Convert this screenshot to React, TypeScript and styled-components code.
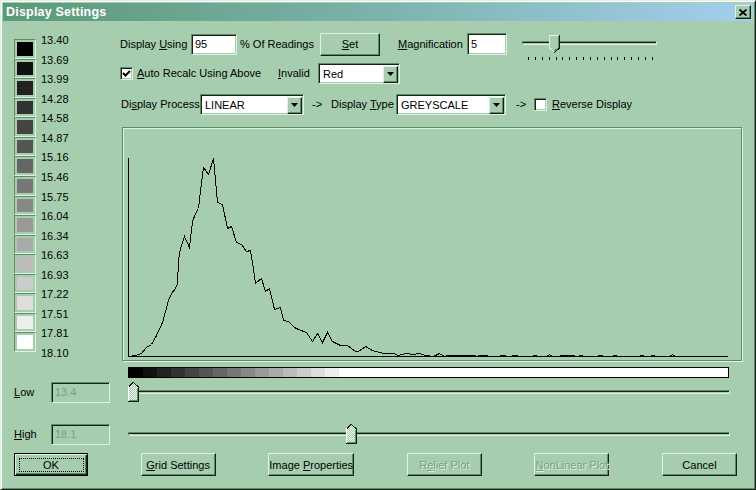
import React from "react";
import styled, { createGlobalStyle, css } from "styled-components";

const FACE = "#a6ceae";
const LIGHT = "#e0f0e3";
const SHADOW = "#5e8c66";
const DARK = "#17211a";
const DIS = "#7a9f83";

const Global = createGlobalStyle`
  html, body { margin: 0; padding: 0; background: ${FACE}; }
  body { font-family: "Liberation Sans", Arial, sans-serif; font-size: 11px; color: #000; }
  * { box-sizing: border-box; }
`;

const Window = styled.div`
  width: 756px;
  height: 490px;
  background: ${FACE};
  border: 1px solid;
  border-color: ${LIGHT} ${DARK} ${DARK} ${LIGHT};
  box-shadow: inset 1px 1px #ffffff, inset -1px -1px ${SHADOW};
  padding: 2px;
  display: flex;
  flex-direction: column;
`;

const TitleBar = styled.div`
  height: 18px;
  flex: none;
  display: flex;
  align-items: center;
  justify-content: space-between;
  padding: 0 2px 0 3px;
  background: linear-gradient(to right, #5b9a78 0%, #78b0a6 45%, #a3cfee 100%);
`;

const TitleText = styled.span`
  color: #fff;
  font-weight: bold;
  font-size: 12.5px;
  letter-spacing: 0.2px;
`;

const CloseBtn = styled.div`
  width: 16px;
  height: 14px;
  background: ${FACE};
  border: 1px solid;
  border-color: ${LIGHT} ${DARK} ${DARK} ${LIGHT};
  box-shadow: inset -1px -1px ${SHADOW};
  display: flex;
  align-items: center;
  justify-content: center;
`;

const Body = styled.div`
  display: flex;
  flex-direction: column;
  padding-left: 11px;
`;

const TopArea = styled.div`
  display: flex;
  margin-top: 12px;
`;

const SwatchArea = styled.div`
  width: 106px;
  display: flex;
  flex: none;
`;

const SwatchCol = styled.div`
  margin-top: 6px;
  width: 22px;
  height: 313px;
  display: flex;
  flex-direction: column;
`;

const Swatch = styled.div<{ $c: string }>`
  flex: 1;
  border: 1px solid;
  border-color: ${SHADOW} ${LIGHT} ${LIGHT} ${SHADOW};
  box-shadow: inset 0 0 0 2px ${FACE};
  background: ${(p) => p.$c};
`;

const ValueCol = styled.div`
  margin-left: 5px;
  height: 327px;
  display: flex;
  flex-direction: column;
  justify-content: space-between;
`;

const Value = styled.span`
  line-height: 14px;
`;

const MainArea = styled.div`
  width: 623px;
  display: flex;
  flex-direction: column;
`;

const Row = styled.div<{ $h: number; $mt?: number }>`
  display: flex;
  align-items: center;
  height: ${(p) => p.$h}px;
  margin-top: ${(p) => p.$mt ?? 0}px;
`;

const Label = styled.span<{ $w?: number; $ml?: number }>`
  display: inline-block;
  flex: none;
  white-space: nowrap;
  line-height: 13px;
  width: ${(p) => (p.$w ? `${p.$w}px` : "auto")};
  margin-left: ${(p) => p.$ml ?? 0}px;
`;

const Field = styled.div<{ $w: number; $h?: number; $disabled?: boolean }>`
  width: ${(p) => p.$w}px;
  height: ${(p) => p.$h ?? 21}px;
  flex: none;
  display: flex;
  align-items: center;
  padding-left: 3px;
  background: ${(p) => (p.$disabled ? FACE : "#fff")};
  color: ${(p) => (p.$disabled ? DIS : "#000")};
  border: 1px solid;
  border-color: ${SHADOW} ${LIGHT} ${LIGHT} ${SHADOW};
  box-shadow: inset 1px 1px ${DARK}, inset -1px -1px ${FACE};
`;

const SelectBox = styled.div<{ $w: number }>`
  width: ${(p) => p.$w}px;
  height: 21px;
  flex: none;
  display: flex;
  align-items: center;
  background: #fff;
  border: 1px solid;
  border-color: ${SHADOW} ${LIGHT} ${LIGHT} ${SHADOW};
  box-shadow: inset 1px 1px ${DARK}, inset -1px -1px ${FACE};
  padding: 2px 1px 1px 2px;
`;

const SelectValue = styled.span`
  flex: 1;
  padding-left: 2px;
  white-space: nowrap;
`;

const DropBtn = styled.div`
  width: 15px;
  height: 17px;
  flex: none;
  background: ${FACE};
  border: 1px solid;
  border-color: ${LIGHT} ${DARK} ${DARK} ${LIGHT};
  box-shadow: inset -1px -1px ${SHADOW};
  display: flex;
  align-items: center;
  justify-content: center;
`;

const CheckBox = styled.div<{ $ml?: number }>`
  width: 13px;
  height: 13px;
  flex: none;
  margin-left: ${(p) => p.$ml ?? 0}px;
  background: #fff;
  border: 1px solid;
  border-color: ${SHADOW} ${LIGHT} ${LIGHT} ${SHADOW};
  box-shadow: inset 1px 1px ${DARK}, inset -1px -1px ${FACE};
  display: flex;
  align-items: center;
  justify-content: center;
`;

const Button = styled.button<{ $w: number; $default?: boolean; $ml?: number }>`
  width: ${(p) => p.$w}px;
  height: 23px;
  flex: none;
  margin: 0;
  margin-left: ${(p) => p.$ml ?? 0}px;
  padding: 0;
  position: relative;
  font: 11px "Liberation Sans", Arial, sans-serif;
  color: #000;
  background: ${FACE};
  border: 1px solid;
  border-color: ${LIGHT} ${DARK} ${DARK} ${LIGHT};
  box-shadow: inset -1px -1px ${SHADOW};
  &:disabled {
    color: ${DIS};
    text-shadow: 1px 1px ${LIGHT};
  }
  ${(p) =>
    p.$default &&
    css`
      border: 1px solid #000;
      box-shadow: inset 1px 1px ${LIGHT}, inset -1px -1px ${DARK}, inset -2px -2px ${SHADOW};
      &::after {
        content: "";
        position: absolute;
        inset: 4px 3px 3px 4px;
        border: 1px dotted #000;
      }
    `}
`;

const MagSlider = styled.div`
  width: 135px;
  margin-left: 15px;
  align-self: flex-start;
  display: flex;
  flex-direction: column;
  flex: none;
`;

const TrackArea = styled.div<{ $h: number }>`
  position: relative;
  height: ${(p) => p.$h}px;
  display: flex;
  align-items: center;
`;

const Track = styled.div`
  width: 100%;
  height: 4px;
  border: 1px solid;
  border-color: ${SHADOW} ${LIGHT} ${LIGHT} ${SHADOW};
  box-shadow: inset 0 1px ${DARK};
`;

const Thumb = styled.div`
  position: absolute;
  line-height: 0;
`;

const TickRow = styled.div`
  margin-top: 4px;
  height: 3px;
  display: flex;
  justify-content: space-between;
  padding: 0 4px 0 6px;
`;

const Tick = styled.div`
  width: 1px;
  height: 3px;
  background: #000;
`;

const ChartBox = styled.div`
  margin-top: 12px;
  margin-left: 2px;
  width: 620px;
  height: 234px;
  border: 1px solid ${SHADOW};
  box-shadow: inset 1px 1px ${LIGHT}, 1px 1px ${LIGHT};
  line-height: 0;
`;

const ScaleBar = styled.div`
  margin-top: 6px;
  margin-left: 114px;
  width: 601px;
  height: 11px;
  border: 1px solid #000;
  display: flex;
`;

const ScaleStep = styled.div<{ $c: string }>`
  width: 14px;
  flex: none;
  background: ${(p) => p.$c};
`;

const ScaleRest = styled.div`
  flex: 1;
  background: #fff;
`;

const RangeRow = styled.div<{ $mt: number }>`
  display: flex;
  align-items: center;
  height: 22px;
  margin-top: ${(p) => p.$mt}px;
`;

const RangeSlider = styled.div`
  position: relative;
  margin-left: 18px;
  width: 602px;
  height: 22px;
  display: flex;
  align-items: center;
`;

const ButtonRow = styled.div`
  margin-top: 8px;
  width: 723px;
  display: flex;
  justify-content: space-between;
`;

const U = styled.span`
  text-decoration: underline;
  text-underline-offset: 1px;
`;

const grey = (v: number) => `rgb(${v},${v},${v})`;
const swatches = Array.from({ length: 16 }, (_, i) => grey(i * 17));
const values = [
  "13.40", "13.69", "13.99", "14.28", "14.58", "14.87", "15.16", "15.46", "15.75",
  "16.04", "16.34", "16.63", "16.93", "17.22", "17.51", "17.81", "18.10",
];

const hist: [number, number][] = [
  [129, 356], [135, 355], [141, 353], [146, 347], [151, 344], [156, 335], [162, 322],
  [168, 300], [171, 293], [175, 288], [177, 283], [178, 260], [180, 248], [184, 236],
  [189, 247], [192, 221], [195, 213], [198, 208], [200, 190], [203, 167], [208, 174],
  [213, 158], [215, 180], [217, 202], [222, 204], [227, 228], [231, 226], [236, 242],
  [241, 244], [246, 251], [250, 250], [252, 262], [255, 283], [261, 278], [265, 291],
  [269, 288], [274, 309], [280, 307], [283, 320], [288, 321], [294, 327], [298, 329],
  [306, 332], [312, 341], [317, 333], [322, 342], [327, 332], [332, 341], [340, 345],
  [347, 345], [355, 351], [358, 351], [365, 346], [372, 350], [383, 353], [393, 353],
  [398, 355], [405, 353], [413, 354], [419, 353], [425, 355], [433, 356], [439, 353],
  [444, 356], [448, 355], [473, 355], [477, 356], [546, 356], [549, 354], [552, 356],
  [669, 356], [672, 354], [675, 356],
];
const dashes: [number, number][] = [
  [478, 488], [500, 506], [512, 518], [533, 537], [560, 575], [579, 583],
  [598, 603], [613, 617], [640, 644], [651, 655],
];

const DropArrow = () => (
  <svg width="7" height="4" viewBox="0 0 7 4">
    <path d="M0 0h7L3.5 4z" fill="#000" />
  </svg>
);

const CheckMark = () => (
  <svg width="9" height="9" viewBox="0 0 9 9">
    <path d="M1 4 L3.5 6.5 L8 2" fill="none" stroke="#000" strokeWidth="2" />
  </svg>
);

const UpThumb = () => (
  <svg width="11" height="20" viewBox="0 0 11 20" shapeRendering="crispEdges">
    <defs>
      <pattern id="dith" width="2" height="2" patternUnits="userSpaceOnUse">
        <rect width="2" height="2" fill={FACE} />
        <rect width="1" height="1" fill="#eef7f0" />
        <rect x="1" y="1" width="1" height="1" fill="#eef7f0" />
      </pattern>
    </defs>
    <polygon points="0,5 5,0 10,5 10,19 0,19" fill="url(#dith)" />
    <polyline points="0.5,19 0.5,5 5,0.5" fill="none" stroke="#ffffff" />
    <polyline points="1,4.5 5,0.5" fill="none" stroke={DARK} />
    <polyline points="5.5,0.5 10.5,5 10.5,19.5 0,19.5" fill="none" stroke={DARK} />
    <polyline points="9.5,5.5 9.5,18.5 1,18.5" fill="none" stroke={SHADOW} />
  </svg>
);

const DownThumb = () => (
  <svg width="11" height="18" viewBox="0 0 11 18" shapeRendering="crispEdges">
    <polygon points="0,0 11,0 11,13 5.5,18 0,13" fill={FACE} />
    <polyline points="0.5,13 0.5,0.5 10,0.5" fill="none" stroke={LIGHT} />
    <polyline points="10.5,0 10.5,13 5.5,17.5" fill="none" stroke={DARK} />
    <polyline points="0.5,13 5.5,17.5" fill="none" stroke={LIGHT} />
    <polyline points="9.5,1 9.5,12.5 5.5,16" fill="none" stroke={SHADOW} />
  </svg>
);

const CloseX = () => (
  <svg width="8" height="7" viewBox="0 0 8 7">
    <path d="M0.5 0.5 L7.5 6.5 M7.5 0.5 L0.5 6.5" stroke="#000" strokeWidth="1.8" />
  </svg>
);

const Histogram = () => (
  <svg width="618" height="232" viewBox="123 128 618 232" shapeRendering="crispEdges">
    <line x1="128.5" y1="158" x2="128.5" y2="357" stroke="#000" />
    <line x1="128" y1="356.5" x2="728" y2="356.5" stroke="#000" />
    <polyline
      points={hist.map(([x, y]) => `${x + 0.5},${y + 0.5}`).join(" ")}
      fill="none"
      stroke="#000"
    />
    {dashes.map(([a, b]) => (
      <line key={a} x1={a} y1="355.5" x2={b} y2="355.5" stroke="#000" />
    ))}
  </svg>
);

const Select = ({ w, value }: { w: number; value: string }) => (
  <SelectBox $w={w}>
    <SelectValue>{value}</SelectValue>
    <DropBtn>
      <DropArrow />
    </DropBtn>
  </SelectBox>
);

export default function App() {
  return (
    <>
      <Global />
      <Window>
        <TitleBar>
          <TitleText>Display Settings</TitleText>
          <CloseBtn>
            <CloseX />
          </CloseBtn>
        </TitleBar>
        <Body>
          <TopArea>
            <SwatchArea>
              <SwatchCol>
                {swatches.map((c) => (
                  <Swatch key={c} $c={c} />
                ))}
              </SwatchCol>
              <ValueCol>
                {values.map((v) => (
                  <Value key={v}>{v}</Value>
                ))}
              </ValueCol>
            </SwatchArea>
            <MainArea>
              <Row $h={22}>
                <Label $w={71}>
                  Display <U>U</U>sing
                </Label>
                <Field $w={46}>95</Field>
                <Label $w={80} $ml={3}>
                  % Of Readings
                </Label>
                <Button $w={60}>
                  <U>S</U>et
                </Button>
                <Label $w={69} $ml={18}>
                  <U>M</U>agnification
                </Label>
                <Field $w={40} $h={22}>
                  5
                </Field>
                <MagSlider>
                  <TrackArea $h={20}>
                    <Track />
                    <Thumb style={{ left: 27, top: 2 }}>
                      <DownThumb />
                    </Thumb>
                  </TrackArea>
                  <TickRow>
                    {Array.from({ length: 19 }, (_, i) => (
                      <Tick key={i} />
                    ))}
                  </TickRow>
                </MagSlider>
              </Row>
              <Row $h={21} $mt={8}>
                <CheckBox>
                  <CheckMark />
                </CheckBox>
                <Label $w={141} $ml={4}>
                  <U>A</U>uto Recalc Using Above
                </Label>
                <Label $w={40}>
                  <U>I</U>nvalid
                </Label>
                <Select w={82} value="Red" />
              </Row>
              <Row $h={21} $mt={10}>
                <Label $w={79} $ml={1}>
                  Di<U>s</U>play Process
                </Label>
                <Select w={104} value="LINEAR" />
                <Label $w={19} $ml={8}>
                  -&gt;
                </Label>
                <Label $w={65}>
                  Display <U>T</U>ype
                </Label>
                <Select w={110} value="GREYSCALE" />
                <Label $w={18} $ml={10}>
                  -&gt;
                </Label>
                <CheckBox />
                <Label $ml={5}>
                  <U>R</U>everse Display
                </Label>
              </Row>
              <ChartBox>
                <Histogram />
              </ChartBox>
            </MainArea>
          </TopArea>
          <ScaleBar>
            {swatches.slice(0, 15).map((c) => (
              <ScaleStep key={c} $c={c} />
            ))}
            <ScaleRest />
          </ScaleBar>
          <RangeRow $mt={3}>
            <Label $w={37}>
              <U>L</U>ow
            </Label>
            <Field $w={59} $disabled>
              13.4
            </Field>
            <RangeSlider>
              <Track />
              <Thumb style={{ left: 0, top: 1 }}>
                <UpThumb />
              </Thumb>
            </RangeSlider>
          </RangeRow>
          <RangeRow $mt={20}>
            <Label $w={37}>
              <U>H</U>igh
            </Label>
            <Field $w={59} $disabled>
              18.1
            </Field>
            <RangeSlider>
              <Track />
              <Thumb style={{ left: 218, top: 1 }}>
                <UpThumb />
              </Thumb>
            </RangeSlider>
          </RangeRow>
          <ButtonRow>
            <Button $w={74} $default>
              OK
            </Button>
            <Button $w={75}>
              <U>G</U>rid Settings
            </Button>
            <Button $w={86}>
              Image <U>P</U>roperties
            </Button>
            <Button $w={75} disabled>
              R<U>e</U>lief Plot
            </Button>
            <Button $w={75} disabled>
              <U>N</U>onLinear Plot
            </Button>
            <Button $w={75}>Cancel</Button>
          </ButtonRow>
        </Body>
      </Window>
    </>
  );
}
